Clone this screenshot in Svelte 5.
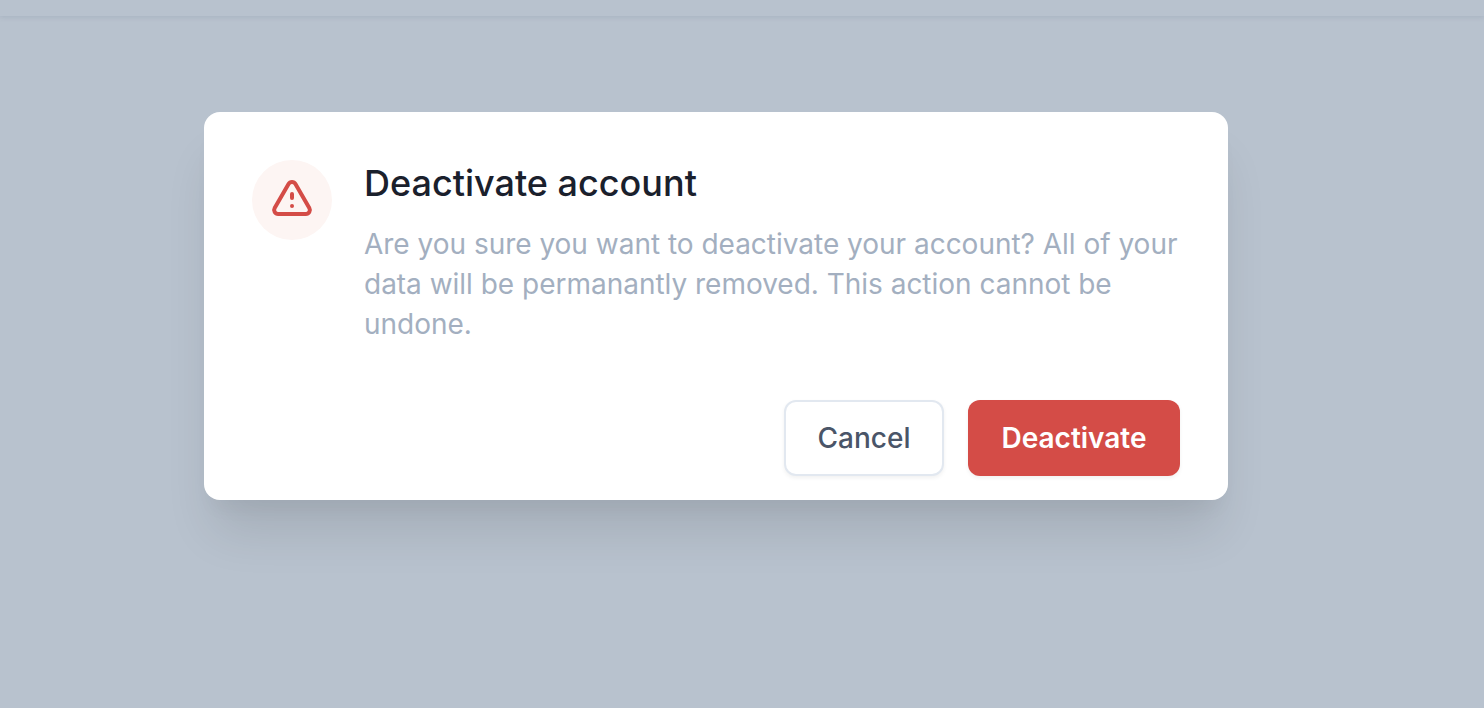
<script>
	let title = "Deactivate account";
	let message = "Are you sure you want to deactivate your account? All of your data will be permanantly removed. This action cannot be undone.";
</script>

<div class="page">
	<div class="topbar"></div>
	<div class="dialog">
		<div class="body">
			<div class="icon">
				<svg width="48" height="48" viewBox="0 0 24 24" fill="none" stroke="currentColor" stroke-width="2" stroke-linecap="round" stroke-linejoin="round">
					<path d="M12 9v2m0 4h.01m-6.938 4h13.856c1.54 0 2.502-1.667 1.732-3L13.732 4c-.77-1.333-2.694-1.333-3.464 0L3.34 16c-.77 1.333.192 3 1.732 3z" />
				</svg>
			</div>
			<div class="text">
				<h3>{title}</h3>
				<p>{message}</p>
			</div>
		</div>
		<div class="actions">
			<button class="cancel">Cancel</button>
			<button class="confirm">Deactivate</button>
		</div>
	</div>
</div>

<style>
	:global(body) {
		background: #b8c2ce;
	}

	.page {
		height: 708px;
		overflow: hidden;
		font-family: Inter, "Liberation Sans", sans-serif;
	}

	.topbar {
		height: 16px;
		box-shadow: 0 1px 5px rgba(100, 116, 139, 0.2);
	}

	.dialog {
		width: 1024px;
		height: 388px;
		box-sizing: border-box;
		margin: 96px 0 0 204px;
		padding: 48px 48px 24px;
		background: #fff;
		border-radius: 16px;
		box-shadow: 0 40px 50px -10px rgba(0, 0, 0, 0.11), 0 16px 20px -8px rgba(0, 0, 0, 0.04);
	}

	.body {
		display: flex;
		gap: 32px;
	}

	.icon {
		flex: none;
		width: 80px;
		height: 80px;
		border-radius: 50%;
		background: #fdf5f3;
		color: #d44c47;
		display: flex;
		align-items: center;
		justify-content: center;
	}

	.text {
		min-width: 0;
	}

	h3 {
		margin: 0;
		padding-top: 3px;
		font-size: 36px;
		line-height: 40px;
		font-weight: 500;
		color: #1a202c;
	}

	p {
		margin: 21px 0 0;
		font-size: 28px;
		line-height: 40px;
		letter-spacing: -0.015px;
		color: #a3afc0;
	}

	.actions {
		display: flex;
		justify-content: flex-end;
		gap: 24px;
		margin-top: 56px;
	}

	button {
		height: 76px;
		box-sizing: border-box;
		border-radius: 12px;
		font: 500 28px/40px Inter, "Liberation Sans", sans-serif;
		box-shadow: 0 2px 4px rgba(0, 0, 0, 0.06);
	}

	.cancel {
		width: 160px;
		background: #fff;
		border: 2px solid #e2e8f0;
		color: #4a5568;
	}

	.confirm {
		width: 212px;
		background: #d44c47;
		border: 0;
		color: #fff;
		font-weight: 600;
	}
</style>
